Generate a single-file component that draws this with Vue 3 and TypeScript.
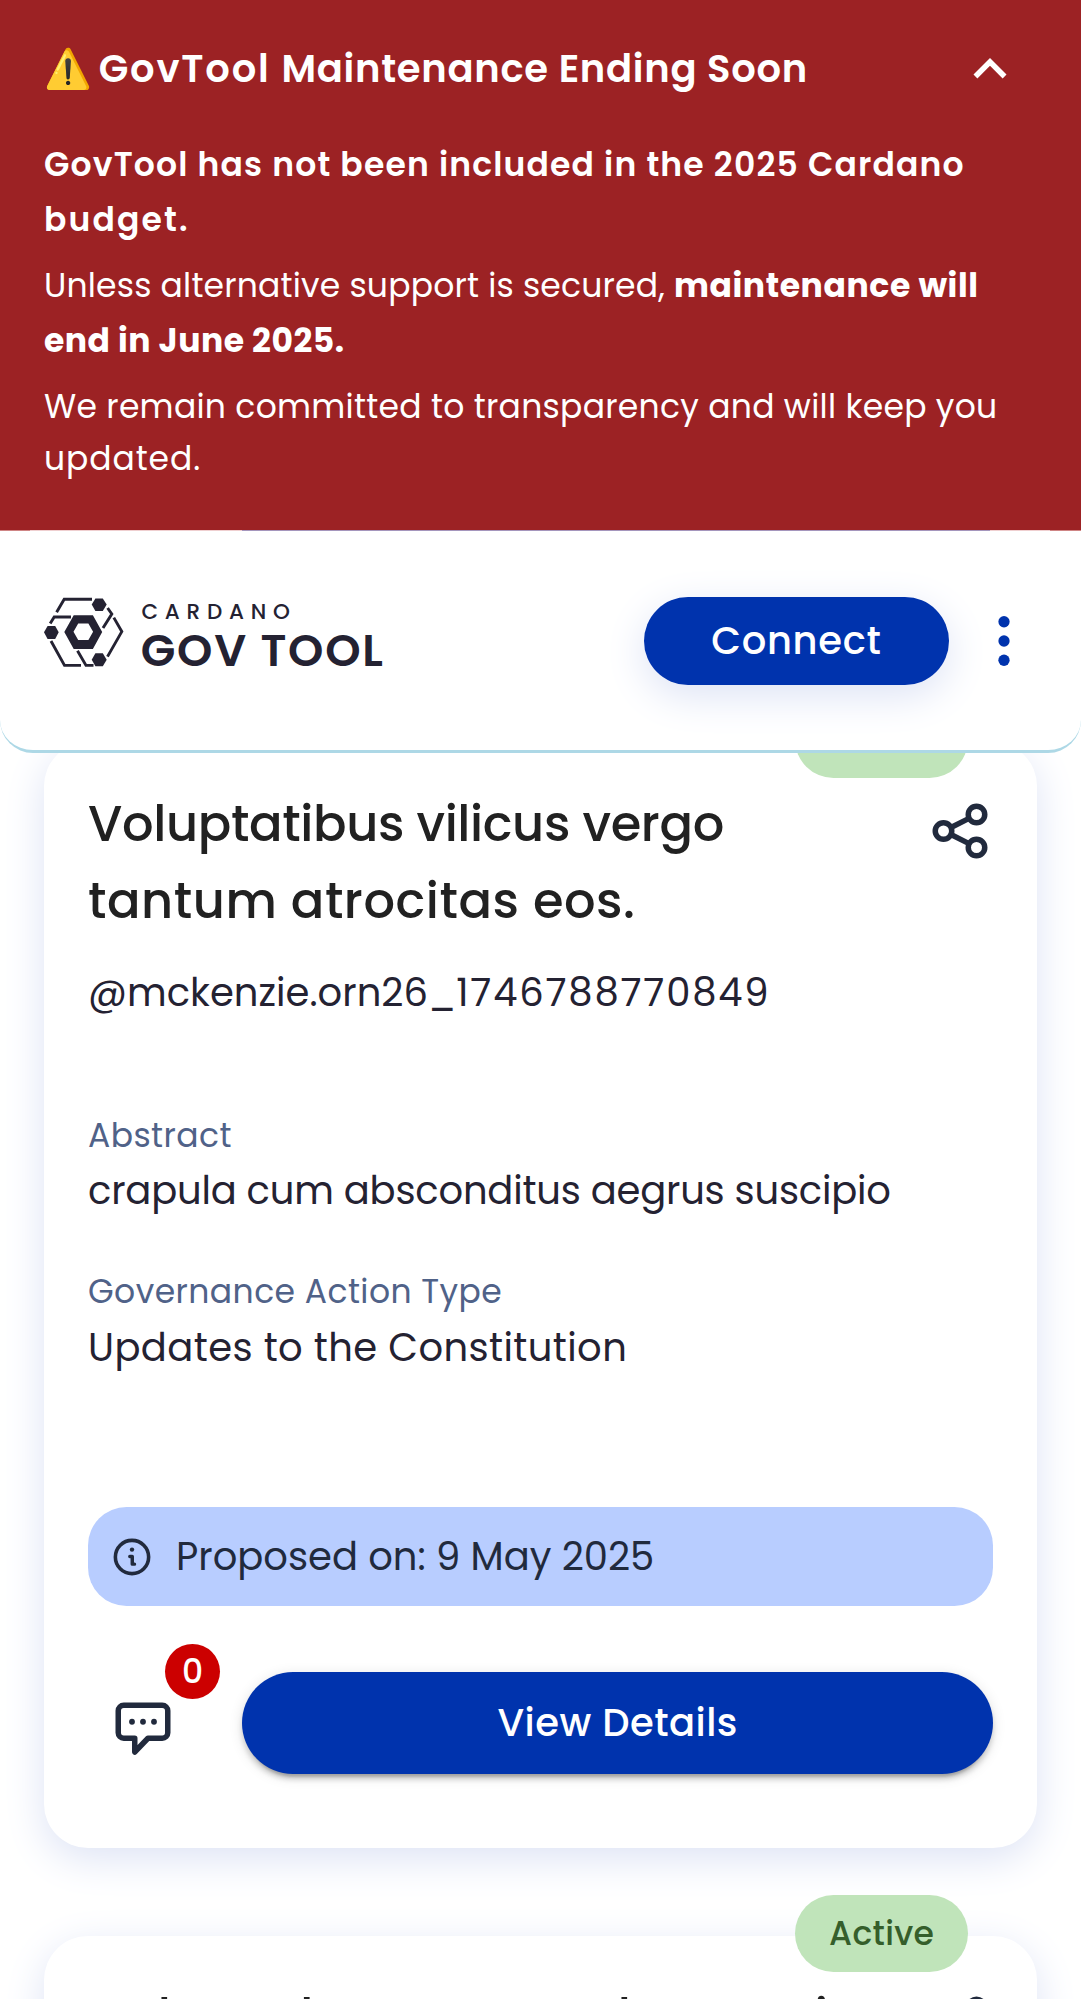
<script setup lang="ts">
interface Line {
  text: string
  tracking: number
}

interface Proposal {
  title: Line[]
  status: string
  author?: Line[]
  abstract?: Line
  actionType?: Line
  proposedOn?: string
  comments?: number
}

const track = (line?: Line) => ({ letterSpacing: `${line?.tracking ?? 0}px` })

const proposals: Proposal[] = [
  {
    title: [
      { text: 'Voluptatibus vilicus vergo', tracking: -0.13 },
      { text: 'tantum atrocitas eos.', tracking: 0.2 },
    ],
    status: '',
    author: [
      { text: '@mckenzie.orn26_', tracking: 0.01 },
      { text: '1746788770849', tracking: 0.66 },
    ],
    abstract: { text: 'crapula cum absconditus aegrus suscipio', tracking: -0.073 },
    actionType: { text: 'Updates to the Constitution', tracking: 0.15 },
    proposedOn: '9 May 2025',
    comments: 0,
  },
  {
    title: [{ text: 'Cohors denuo rerum bonus via', tracking: 0 }],
    status: 'Active',
  },
]
</script>

<template>
  <div class="viewport">
    <div class="screen">
      <section class="banner">
        <div class="banner-head">
          <h2><span class="warn">⚠️</span><span class="t-head">GovTool </span>Maintenance Ending Soon</h2>
          <svg class="chevron" viewBox="0 0 24 24">
            <path fill="#fff" d="m12 8-6 6 1.41 1.41L12 10.83l4.59 4.58L18 14z" />
          </svg>
        </div>
        <p class="semi">
          <span class="t-wide">GovTool has not been included in the 2025 Cardano</span><br />
          <span class="t-widest">budget.</span>
        </p>
        <p class="mixed">
          <span class="t-tight">Unless alternative support is secured, </span><strong>maintenance will</strong><br />
          <strong class="t-mid">end in June 2025.</strong>
        </p>
        <p class="plain">
          <span class="t-tight">We remain committed to transparency and will keep you</span><br />
          <span class="t-wide">updated.</span>
        </p>
      </section>

      <header class="topbar">
        <svg class="logo" viewBox="0 0 340 71">
          <g fill="none" stroke="#242232" stroke-width="2.9">
            <path d="M12.6 15.2 20.2 2.2H48" />
            <path d="M6.2 26.4 10.2 20H27" />
            <path d="M7 44 20.5 68.4H37" />
            <path d="M33.5 53.8 42 68.4H49.5" />
            <path d="M63.6 11 67.8 17 59 31" />
            <path d="M69.8 20.6 77.8 34.6 63.5 59.6" />
          </g>
          <g fill="#242232">
            <path d="M51.4 1.4h7.4l3.9 6.2-3.9 6.4h-7.4l-3.7-6.4z" />
            <path d="M3.6 29h7.6l3.5 6.3-3.5 6.6H3.6L0 35.3z" />
            <path d="M51.4 56.3h7.4l3.9 6.4-3.9 6.5h-7.4l-3.7-6.5z" />
            <path fill-rule="evenodd" d="M29.7 18.3h19.2l9.3 16.8-9.3 16.8H29.7l-9.4-16.8zM34.2 26.5l-4.7 8.2 4.7 8.2h10.2l4.7-8.2-4.7-8.2z" />
          </g>
          <text x="97.4" y="22.4" class="logo-top">CARDANO</text>
          <text x="96.8" y="68.6" class="logo-main">GOV TOOL</text>
        </svg>
        <button class="connect">Connect</button>
        <svg class="menu" viewBox="0 0 24 24" fill="#0033ad">
          <circle cx="12" cy="5" r="2.05" />
          <circle cx="12" cy="12" r="2.05" />
          <circle cx="12" cy="19" r="2.05" />
        </svg>
      </header>

      <main class="list">
        <article v-for="(p, i) in proposals" :key="i" class="card">
          <span class="status">{{ p.status }}</span>
          <div class="card-head">
            <h3>
              <div v-for="line in p.title" :key="line.text" :style="track(line)">{{ line.text }}</div>
            </h3>
            <svg class="share" viewBox="0 0 24 24" fill="none" stroke="#212a3d" stroke-width="2">
              <circle cx="18" cy="6" r="3" />
              <circle cx="6" cy="12" r="3" />
              <circle cx="18" cy="18" r="3" />
              <path d="m8.7 10.7 6.6-3.3M8.7 13.3l6.6 3.3" />
            </svg>
          </div>
          <template v-if="p.author">
            <div class="author"><span v-for="part in p.author" :key="part.text" :style="track(part)">{{ part.text }}</span></div>
            <dl class="facts">
              <dt>Abstract</dt>
              <dd :style="track(p.abstract)">{{ p.abstract?.text }}</dd>
              <dt>Governance Action Type</dt>
              <dd :style="track(p.actionType)">{{ p.actionType?.text }}</dd>
            </dl>
            <div class="proposed">
              <svg viewBox="0 0 16 16">
                <circle cx="8" cy="8" r="6.05" fill="none" stroke="#212a3d" stroke-width="1.3" />
                <circle cx="8" cy="5.3" r=".8" fill="#212a3d" />
                <path d="M7.2 7.8h.9v2.8h.8" fill="none" stroke="#212a3d" stroke-width="1.25" stroke-linecap="round" stroke-linejoin="round" />
              </svg>
              <span>Proposed on: {{ p.proposedOn }}</span>
            </div>
            <div class="actions">
              <div class="comments">
                <svg viewBox="0 0 24 24" fill="none" stroke="#212a3d" stroke-width="2" stroke-linejoin="round">
                  <path d="M5 3h14a2 2 0 0 1 2 2v8a2 2 0 0 1-2 2h-5.2L9 20v-5H5a2 2 0 0 1-2-2V5a2 2 0 0 1 2-2z" />
                  <g fill="#212a3d" stroke="none">
                    <circle cx="8" cy="9" r="1.05" />
                    <circle cx="12" cy="9" r="1.05" />
                    <circle cx="16" cy="9" r="1.05" />
                  </g>
                </svg>
                <span class="badge">{{ p.comments }}</span>
              </div>
              <button class="details">View Details</button>
            </div>
          </template>
        </article>
      </main>
    </div>
  </div>
</template>

<style>
html,
body {
  background: #fff;
  overflow: hidden;
}
</style>

<style scoped>
.viewport {
  width: 1081px;
  height: 1999px;
  overflow: hidden;
}

/* Mobile layout in CSS pixels, shown at a density of 2.75 */
.screen {
  width: 393.1px;
  height: 726.9px;
  zoom: 2.75;
  font-family: Poppins, Inter, 'Noto Sans', sans-serif;
  background: #fff;
}

h2,
h3,
p,
dl,
dd {
  margin: 0;
}

.banner {
  position: relative;
  z-index: 2;
  box-sizing: border-box;
  height: 193.1px;
  padding: 16px;
  background: #9c2224;
  color: #fff;
  font-size: 12px;
  white-space: nowrap;
}

.banner::after {
  content: '';
  position: absolute;
  left: 0;
  right: 0;
  bottom: 0;
  height: 0.37px;
  background: linear-gradient(90deg, #cf8585 0 11px, #efcfd0 11px 88px, #a596bd 88px 360px, #efcfd0 360px 382px, #cf8585 382px);
}

.banner-head {
  display: flex;
  align-items: center;
  justify-content: space-between;
  height: 18px;
  padding-right: 5px;
  margin-bottom: 15.8px;
}

.banner-head h2 {
  font-size: 14px;
  line-height: 20px;
  font-weight: 600;
  letter-spacing: 0.26px;
}

.warn {
  display: inline-block;
  width: 19.9px;
  letter-spacing: 0;
}

.t-head {
  letter-spacing: 0.65px;
}

.chevron {
  width: 24px;
  height: 24px;
}

.semi {
  font-weight: 600;
  line-height: 20px;
  margin-bottom: 4px;
}

.mixed {
  line-height: 20px;
  margin-bottom: 4.7px;
}

.mixed strong {
  letter-spacing: 0.22px;
}

.plain {
  line-height: 19px;
}

.t-tight {
  letter-spacing: 0.1px;
}

.mixed .t-tight {
  letter-spacing: 0.07px;
}

.mixed .t-mid {
  letter-spacing: 0.19px;
}

.t-wide {
  letter-spacing: 0.42px;
}

.plain .t-wide {
  letter-spacing: 0.33px;
}

.t-widest {
  letter-spacing: 0.78px;
}

.topbar {
  position: relative;
  z-index: 1;
  box-sizing: border-box;
  display: flex;
  align-items: center;
  height: 80.8px;
  padding: 0 16px;
  background: #fff;
  border-bottom: 1.1px solid #add8e6;
  border-radius: 0 0 12px 12px;
}

.logo {
  width: 123.64px;
  height: 25.82px;
  margin-right: auto;
  margin-top: -5.8px;
  overflow: visible;
}

.logo text {
  fill: #242232;
}

.logo-top {
  font-size: 21.5px;
  font-weight: 500;
  letter-spacing: 6.8px;
}

.logo-main {
  font-size: 45px;
  font-weight: 600;
  letter-spacing: 1.75px;
}

button {
  border: 0;
  padding: 0;
  font-family: inherit;
  font-size: 14px;
  font-weight: 500;
  color: #fff;
  background: #0033ad;
  border-radius: 100px;
}

.connect {
  width: 111px;
  height: 32px;
  letter-spacing: 0.25px;
  box-shadow: 0 4px 15px #dde3f5;
}

.menu {
  width: 24px;
  height: 24px;
  margin-left: 8px;
}

.list {
  display: flex;
  flex-direction: column;
  gap: 32px;
  padding: 0 16px;
  margin-top: -4px;
}

.card {
  position: relative;
  box-sizing: border-box;
  flex: none;
  height: 402px;
  padding: 16px;
  border-radius: 16px;
  background: #fff;
  box-shadow: 0 4px 15px #dde3f5;
}

.status {
  position: absolute;
  top: -14.9px;
  right: 25px;
  width: 63px;
  height: 28px;
  border-radius: 14px;
  background: #c0e4ba;
  color: #355e2b;
  font-size: 12px;
  font-weight: 500;
  line-height: 28px;
  letter-spacing: 0.12px;
  text-align: center;
}

.card-head {
  display: flex;
  justify-content: space-between;
  align-items: flex-start;
  height: 56px;
}

.card-head h3 {
  margin-top: -0.5px;
  font-size: 18px;
  font-weight: 500;
  line-height: 28px;
  color: #212121;
  white-space: nowrap;
}

.share {
  width: 24px;
  height: 24px;
  margin-top: 4.2px;
}

.author {
  margin-top: 8.3px;
  font-size: 14px;
  line-height: 22px;
  color: #242232;
}

.facts {
  margin-top: 31.8px;
  height: 144.1px;
}

.facts dt {
  font-size: 12px;
  line-height: 18px;
  letter-spacing: 0.16px;
  color: #506288;
}

.facts dd {
  font-size: 14px;
  line-height: 20px;
  margin: 0.9px 0 17.9px;
  color: #242232;
}

.facts dd:last-child {
  margin-top: 1.1px;
}

.proposed {
  display: flex;
  align-items: center;
  gap: 8px;
  height: 36px;
  padding-left: 8px;
  border-radius: 14px;
  background: #b8cdff;
  color: #212a3d;
  font-size: 14px;
  line-height: 20px;
}

.proposed svg {
  width: 16px;
  height: 16px;
}

.actions {
  display: flex;
  justify-content: space-between;
  margin-top: 24px;
}

.comments {
  position: relative;
  width: 40px;
  height: 40px;
}

.comments svg {
  display: block;
  width: 24px;
  height: 24px;
  margin: 9px 8px 0;
}

.badge {
  position: absolute;
  top: -10.1px;
  left: 28px;
  width: 20px;
  height: 20px;
  border-radius: 50%;
  background: #c00;
  color: #fff;
  font-size: 12px;
  font-weight: 500;
  line-height: 20px;
  text-align: center;
}

.details {
  width: 273px;
  height: 37px;
  padding-bottom: 0.6px;
  letter-spacing: 0.17px;
  box-shadow:
    0 3px 1px -2px rgba(0, 0, 0, 0.2),
    0 2px 2px rgba(0, 0, 0, 0.14),
    0 1px 5px rgba(0, 0, 0, 0.12);
}
</style>
